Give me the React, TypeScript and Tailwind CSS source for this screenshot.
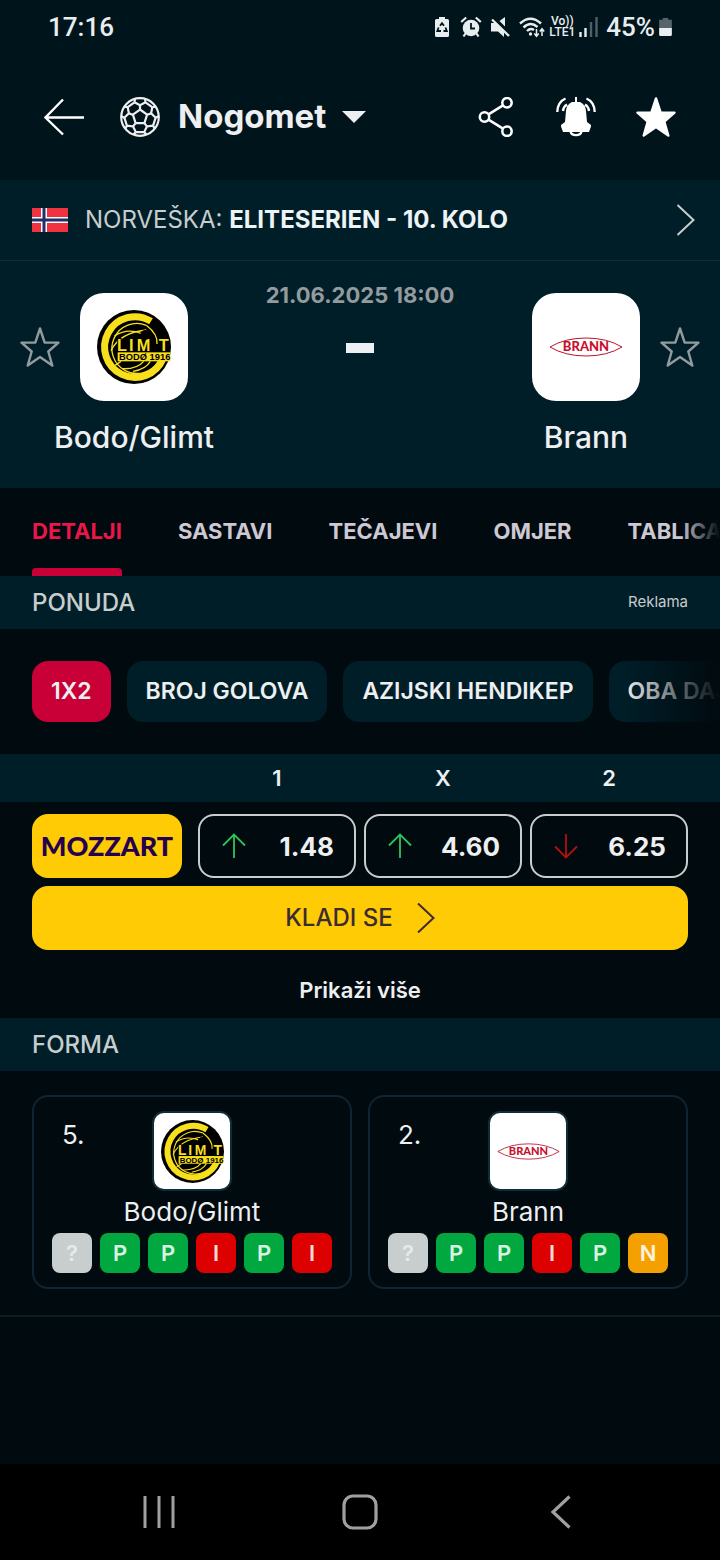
import { clsx } from "clsx";

type Result = "?" | "P" | "I" | "N";

const tabs = ["DETALJI", "SASTAVI", "TEČAJEVI", "OMJER", "TABLICA"];
const markets = ["1X2", "BROJ GOLOVA", "AZIJSKI HENDIKEP", "OBA DAJU"];

const odds = [
  { name: "1", value: "1.48", up: true },
  { name: "X", value: "4.60", up: true },
  { name: "2", value: "6.25", up: false },
];

const resultColors: Record<Result, string> = {
  "?": "bg-[#c8cdcd]",
  P: "bg-[#00a83f]",
  I: "bg-[#dc0000]",
  N: "bg-[#f3a000]",
};

const form: { rank: string; team: string; results: Result[] }[] = [
  { rank: "5.", team: "Bodo/Glimt", results: ["?", "P", "P", "I", "P", "I"] },
  { rank: "2.", team: "Brann", results: ["?", "P", "P", "I", "P", "N"] },
];

function StatusBar() {
  return (
    <div className="flex h-[54px] items-center justify-between pr-12 pl-12 font-[Roboto,sans-serif] text-[#e8eef0]">
      <span className="text-[26px] font-medium">17:16</span>
      <div className="flex items-center">
        <svg className="mr-2.5" width="16" height="22" viewBox="0 0 16 22">
          <path d="M5 1h6v2h2.500q1.500 0 1.500 1.500v15q0 1.500-1.500 1.500h-11Q1 21 1 19.500v-15Q1 3 2.500 3H5z" fill="currentColor" />
          <path d="M6 9.800l2-2.600 2 2.600M11.500 11.500l1.300 3.500H9.500M7 15H3.300l1.300-3.500" fill="none" stroke="#00141c" strokeWidth="1.800" />
        </svg>
        <svg className="mr-2" width="22" height="22" viewBox="0 0 22 22">
          <circle cx="11" cy="12" r="8.300" fill="currentColor" />
          <path d="M1.200 6l5-4.500M20.800 6l-5-4.500M5.500 17.500l-2 3M16.500 17.500l2 3" stroke="currentColor" strokeWidth="2.200" />
          <path d="M11 7v5.500h4" fill="none" stroke="#00141c" strokeWidth="1.800" />
        </svg>
        <svg className="mr-2" width="21" height="22" viewBox="0 0 21 22">
          <path d="M1 7h4l9 9v5l-6-5.500H1zM9.500 5L15 1v9.500z" fill="currentColor" />
          <path d="M2 3.500L19 20" stroke="currentColor" strokeWidth="2.400" />
        </svg>
        <svg className="mr-1" width="26" height="22" viewBox="0 0 26 22">
          <g fill="none" stroke="currentColor" strokeWidth="2.400">
            <path d="M1 7.500Q11.500-2 22 7.500" />
            <path d="M4.500 11.500Q11.500 5 18.500 11" />
            <path d="M8 15Q11.500 11.500 15 14" />
          </g>
          <circle cx="11.500" cy="18" r="1.700" fill="currentColor" />
          <path d="M17.500 13v7M15.300 17.500l2.200 2.800 2.200-2.800M23 20v-7M20.800 15.500L23 12.700l2.200 2.800" fill="none" stroke="currentColor" strokeWidth="1.500" />
        </svg>
        <span className="mr-1 flex flex-col items-center text-[12px] leading-[11px] font-medium">
          <span>Vo))</span>
          <span>LTE1</span>
        </span>
        <svg className="mr-2" width="19" height="20" viewBox="0 0 19 20">
          <path d="M1.500 15v5M6.500 11v9" stroke="currentColor" strokeWidth="2.400" />
          <path d="M12 5v15M17.500 0v20" stroke="#4f5f66" strokeWidth="2.400" />
        </svg>
        <span className="mr-1 text-[26px] font-medium">45%</span>
        <svg width="13" height="20" viewBox="0 0 14 22">
          <path d="M4 1h6v2h4v9H0V3h4z" fill="#56646b" />
          <path d="M0 12h14v7.500q0 1.500-1.500 1.500h-11Q0 21 0 19.500z" fill="currentColor" />
        </svg>
      </div>
    </div>
  );
}

function SoccerBall() {
  return (
    <svg width="40" height="40" viewBox="0 0 40 40" fill="none" stroke="currentColor" strokeWidth="2.200">
      <circle cx="20" cy="20" r="18.800" />
      {[0, 72, 144, 216, 288].map((angle) => (
        <path
          key={angle}
          transform={`rotate(${angle} 20 20)`}
          d="M20 12.500L27.100 17.700M20 12.500V8.300M14.500 5.300L20 8.300L25.500 5.300M14.500 5.300L15 1.700M25.500 5.300L25 1.700M25.500 5.300L32.200 10.200"
        />
      ))}
    </svg>
  );
}

const starPath = "M20 1.500L24.700 15.600H38.500L28.300 24.500L32.300 38.500L20 30L7.700 38.500L11.700 24.500L1.500 15.600H15.300Z";

function Star({ filled }: { filled?: boolean }) {
  return (
    <svg width="40" height="40" viewBox="0 0 40 40" stroke="currentColor" strokeLinejoin="round" strokeWidth="2.400" fill={filled ? "currentColor" : "none"}>
      <path d={starPath} />
    </svg>
  );
}

function Header() {
  return (
    <header className="flex h-[126px] items-center px-11 text-white">
      <button type="button" aria-label="Natrag" className="mr-9">
        <svg width="40" height="40" viewBox="0 0 40 40" fill="none" stroke="currentColor" strokeWidth="2.400">
          <path d="M40 20.500H2M19 2.500L1.500 20.500L19 37.500" />
        </svg>
      </button>
      <button type="button" className="flex items-center text-[#eeeff0]">
        <SoccerBall />
        <span className="mr-4 ml-[18px] text-[33px] font-bold">Nogomet</span>
        <svg width="24" height="12" viewBox="0 0 24 12" fill="currentColor">
          <path d="M0 0H24L12 12Z" />
        </svg>
      </button>
      <div className="ml-auto flex gap-10">
        <button type="button" aria-label="Podijeli">
          <svg width="40" height="40" viewBox="0 0 40 40" fill="none" stroke="currentColor" strokeWidth="2.500">
            <circle cx="8.500" cy="20" r="4.700" />
            <circle cx="31" cy="5.800" r="4.700" />
            <circle cx="31" cy="34.200" r="4.700" />
            <path d="M12.500 17.400L27 8.400M12.500 22.600L27 31.600" />
          </svg>
        </button>
        <button type="button" aria-label="Obavijesti">
          <svg width="40" height="40" viewBox="0 0 40 40">
            <path d="M19 0h2v5h3q5.500 2.500 6 9l1 11 4 3v1.500l-2 5.500H7l-2-5.500V28l4-3 1-11q.5-6.500 6-9h3z" fill="currentColor" />
            <g fill="none" stroke="currentColor" strokeWidth="2.400">
              <path d="M14.500 34.500a5.600 4.500 0 0 0 11 0" />
              <path d="M9.500 1.500Q1.500 5 1.300 15M11 7.500Q7.500 9.500 7 14M30.500 1.500Q38.500 5 38.700 15M29 7.500Q32.500 9.500 33 14" />
            </g>
          </svg>
        </button>
        <button type="button" aria-label="Favorit">
          <Star filled />
        </button>
      </div>
    </header>
  );
}

function GlimtCrest({ className }: { className: string }) {
  return (
    <svg className={className} viewBox="20 28 222 222" role="img" aria-label="Bodo/Glimt">
      <circle cx="131" cy="139" r="111" />
      <g fill="none" stroke="#f7df1c">
        <path d="M168 74A75 75 0 1 0 204 182" strokeWidth="4" />
        <path d="M182 62A91 91 0 1 0 218 174" strokeWidth="21" />
        <path d="M62 150Q88 96 168 88M72 106Q110 82 152 98M168 74Q204 102 200 130M96 204Q140 206 160 182M128 212Q166 206 180 182M74 194L92 182" strokeWidth="4" />
      </g>
      <rect x="82" y="155" width="158" height="27" fill="#f7df1c" />
      <text x="80 116 139 205" y="151" fill="#f7df1c" stroke="#000" strokeWidth="6" paintOrder="stroke" fontFamily="Liberation Sans, sans-serif" fontWeight="700" fontSize="49">LIMT</text>
      <circle cx="165" cy="103" r="15" />
      <text x="86" y="178" fontFamily="Liberation Sans, sans-serif" fontWeight="700" fontSize="28">BODØ 1916</text>
    </svg>
  );
}

function BrannCrest({ className }: { className: string }) {
  return (
    <svg className={className} viewBox="0 0 74 74" role="img" aria-label="Brann">
      <path d="M1 37Q16 28 37 28T73 37Q58 46 37 46T1 37Z" fill="none" stroke="#b5152c" strokeWidth="1" />
      <text x="37" y="41" textAnchor="middle" fill="#c8102e" fontFamily="Lato, sans-serif" fontWeight="900" fontSize="13">BRANN</text>
    </svg>
  );
}

function Crest({ team, className }: { team: string; className: string }) {
  return team === "Brann" ? <BrannCrest className={className} /> : <GlimtCrest className={className} />;
}

function Team({ name, away }: { name: string; away?: boolean }) {
  return (
    <div className={clsx("flex gap-5 pt-8", away && "flex-row-reverse")}>
      <button type="button" aria-label={`Prati ${name}`} className="flex h-[108px] items-center text-[#949b9e]">
        <Star />
      </button>
      <div className="flex w-[108px] flex-col items-center">
        <div className="flex size-[108px] items-center justify-center rounded-3xl bg-white">
          <Crest team={name} className="size-[74px]" />
        </div>
        <span className="mt-4 text-[30px] leading-10 font-medium whitespace-nowrap text-[#eeeff0]">{name}</span>
      </div>
    </div>
  );
}

function MatchSummary() {
  return (
    <section className="bg-[#001e28]">
      <a href="#liga" className="flex h-[81px] items-center border-b border-[#0f2d37] pr-6 pl-8 text-2xl">
        <svg width="36" height="24" viewBox="0 0 36 24" className="mr-[17px]">
          <path d="M0 0h36v24H0z" fill="#ef3340" />
          <path d="M0 12h36M12 0v24" stroke="#fff" strokeWidth="6" />
          <path d="M0 12h36M12 0v24" stroke="#1f2f6b" strokeWidth="3" />
        </svg>
        <span className="text-[#c8cdcd]">NORVEŠKA:&nbsp;</span>
        <span className="font-bold text-[#eef3f5]">ELITESERIEN - 10. KOLO</span>
        <svg width="20" height="32" viewBox="0 0 20 32" fill="none" stroke="#c8cdcd" strokeWidth="2" className="ml-auto">
          <path d="M1.500 1L17.500 16L1.500 31" />
        </svg>
      </a>
      <div className="flex justify-between px-5 pb-[31px]">
        <Team name="Bodo/Glimt" />
        <div className="flex flex-col items-center pt-5">
          <time className="text-[22px] leading-7 font-bold text-[#949b9e]">21.06.2025 18:00</time>
          <div className="mt-[34px] h-2.5 w-7 bg-[#eeeff0]" />
        </div>
        <Team name="Brann" away />
      </div>
    </section>
  );
}

function SectionTitle({ title, note }: { title: string; note?: string }) {
  return (
    <div className="flex h-[53px] items-center justify-between bg-[#001e28] px-8 text-[#c8cdcd]">
      <h2 className="text-2xl font-medium">{title}</h2>
      {note && <span className="text-[15px]">{note}</span>}
    </div>
  );
}

function Odds() {
  return (
    <table className="w-full table-fixed">
      <thead>
        <tr className="h-12 bg-[#001e28] text-[22px] text-[#eeeff0]">
          <th className="w-[190px]" />
          <th className="w-[170px] pr-1 pl-2 font-semibold">1</th>
          <th className="w-[166px] px-1 font-semibold">X</th>
          <th className="w-[194px] pr-8 pl-1 font-semibold">2</th>
        </tr>
      </thead>
      <tbody>
        <tr>
          <td className="pt-3 pr-2 pl-8">
            <a href="#mozzart" className="flex h-16 items-center justify-center rounded-2xl bg-[#ffcb05] font-[Lato,sans-serif] text-[27px] font-black text-[#240050]">
              MOZZART
            </a>
          </td>
          {odds.map((odd, i) => (
            <td key={odd.name} className={clsx("pt-3", i === 0 ? "pr-1 pl-2" : i === 1 ? "px-1" : "pr-8 pl-1")}>
              <button type="button" className="flex h-16 w-full items-center justify-between rounded-2xl border-2 border-[#c8cdcd] px-5 text-[26px] font-bold text-[#eeeff0]">
                <svg width="28" height="28" viewBox="0 0 28 28" fill="none" strokeWidth="1.800" className={odd.up ? "text-[#2fc45a]" : "text-[#b50f0f]"} stroke="currentColor">
                  <path d={odd.up ? "M14 26V2.500M3 13.500L14 2.500L25 13.500" : "M14 2V25.500M3 14.500L14 25.500L25 14.500"} />
                </svg>
                {odd.value}
              </button>
            </td>
          ))}
        </tr>
      </tbody>
    </table>
  );
}

export default function App() {
  return (
    <div className="flex min-h-screen flex-col overflow-x-hidden bg-[#010a0f] font-[Inter,sans-serif]">
      <div className="bg-[#00141c]">
        <StatusBar />
        <Header />
      </div>
      <MatchSummary />

      <nav className="relative flex h-[88px] gap-14 overflow-hidden px-8 text-[22px] font-bold whitespace-nowrap">
        {tabs.map((tab, i) => (
          <a key={tab} href={`#${tab.toLowerCase()}`} className={clsx("flex shrink-0 flex-col", i === 0 ? "text-[#ea1549]" : "text-[#cdc8d4]")}>
            <span className="flex flex-1 items-center pt-1.5">{tab}</span>
            <span className={clsx("h-2 rounded-t", i === 0 && "bg-[#c80037]")} />
          </a>
        ))}
        <div className="pointer-events-none absolute inset-y-0 right-0 w-10 bg-linear-to-l from-[#010a0f] to-transparent" />
      </nav>

      <main className="flex-1">
        <SectionTitle title="PONUDA" note="Reklama" />
        <div className="relative flex gap-4 overflow-hidden px-8 py-8 text-[23px] font-semibold whitespace-nowrap text-[#eeeff0]">
          {markets.map((market, i) => (
            <button key={market} type="button" className={clsx("h-[61px] shrink-0 rounded-2xl px-[19px]", i === 0 ? "bg-[#c80037]" : "bg-[#001e28]")}>
              {market}
            </button>
          ))}
          <div className="pointer-events-none absolute inset-y-0 right-0 w-24 bg-linear-to-l from-[#010a0f] to-transparent" />
        </div>

        <Odds />
        <div className="px-8 pt-2">
          <button type="button" className="flex h-16 w-full items-center justify-center gap-6 rounded-2xl bg-[#ffcb05] text-2xl font-medium text-[#3c2a35]">
            KLADI SE
            <svg width="18" height="30" viewBox="0 0 18 30" fill="none" stroke="currentColor" strokeWidth="2">
              <path d="M1 0.500L16.500 15L1 29.500" />
            </svg>
          </button>
        </div>
        <button type="button" className="block w-full pt-6 pb-3 text-[22px] leading-8 font-semibold text-[#eeeff0]">
          Prikaži više
        </button>

        <SectionTitle title="FORMA" />
        <div className="flex gap-4 border-b-2 border-[#0b1c24] px-8 pt-6 pb-[26px]">
          {form.map(({ rank, team, results }) => (
            <article key={team} className="flex-1 rounded-2xl border-2 border-[#0f2530] px-[18px] py-3.5 text-[#eeeff0]">
              <div className="grid grid-cols-[1fr_auto_1fr]">
                <span className="pt-2 pl-2.5 text-[26px] leading-8">{rank}</span>
                <div className="flex size-20 items-center justify-center rounded-xl border-2 border-[#0f2d37] bg-white">
                  <Crest team={team} className="size-[63px]" />
                </div>
              </div>
              <p className="text-center text-[26px] leading-[42px]">{team}</p>
              <div className="flex justify-center gap-2">
                {results.map((result, i) => (
                  <span key={i} className={clsx("flex size-10 items-center justify-center rounded-lg text-[22px] font-semibold", result === "?" ? "text-white/60" : "text-white/85", resultColors[result])}>
                    {result}
                  </span>
                ))}
              </div>
            </article>
          ))}
        </div>
      </main>

      <footer className="grid h-24 grid-cols-3 place-items-center bg-black px-[58px] text-[#a0a0a0]">
        <button type="button" aria-label="Nedavne aplikacije">
          <svg width="34" height="34" viewBox="0 0 34 34" stroke="currentColor" strokeWidth="3">
            <path d="M3 1v32M17 1v32M31 1v32" />
          </svg>
        </button>
        <button type="button" aria-label="Početna">
          <svg width="36" height="36" viewBox="0 0 36 36" fill="none" stroke="currentColor" strokeWidth="3.200">
            <rect x="2" y="2" width="32" height="32" rx="9" />
          </svg>
        </button>
        <button type="button" aria-label="Povratak">
          <svg width="22" height="34" viewBox="0 0 22 34" fill="none" stroke="currentColor" strokeWidth="3.200">
            <path d="M19.500 1.500L3 17L19.500 32.500" />
          </svg>
        </button>
      </footer>
    </div>
  );
}
